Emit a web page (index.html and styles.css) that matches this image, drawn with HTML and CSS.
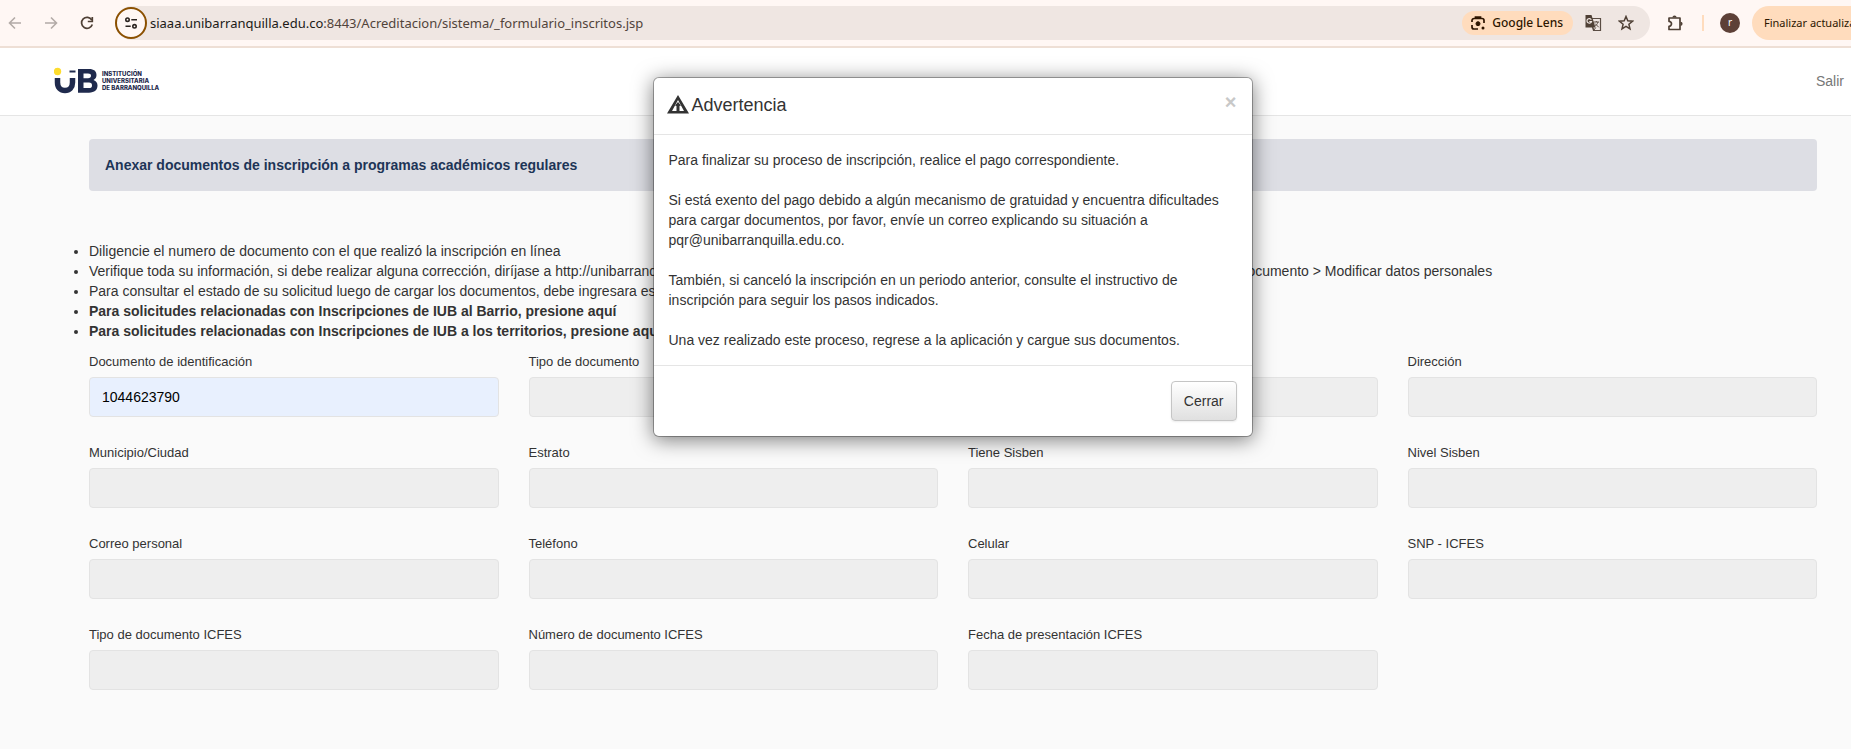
FILE: index.html
```html
<!DOCTYPE html>
<html lang="es">
<head>
<meta charset="utf-8">
<title>Anexar documentos de inscripción</title>
<link rel="stylesheet" href="styles.css">
</head>
<body>
<div class="toolbar">
  <button class="tool" type="button" aria-label="Atrás">
    <svg width="16" height="16" viewBox="0 0 16 16" fill="none" stroke="#b3aba7" stroke-width="1.600"><path d="M14 8H3M8 2.500 2.500 8 8 13.500"/></svg>
  </button>
  <button class="tool" type="button" aria-label="Adelante">
    <svg width="16" height="16" viewBox="0 0 16 16" fill="none" stroke="#b3aba7" stroke-width="1.600"><path d="M2 8h11M8 2.500 13.500 8 8 13.500"/></svg>
  </button>
  <button class="tool" type="button" aria-label="Recargar">
    <svg width="16" height="16" viewBox="0 0 16 16" fill="none" stroke="#4f4035" stroke-width="1.700"><path d="M12.800 5A5.500 5.500 0 1 0 13.300 9.500"/><path d="M13.300 2v4.500H8.800"/></svg>
  </button>
  <div class="omnibox">
    <button class="site-info" type="button" aria-label="Información del sitio">
      <svg width="14" height="14" viewBox="0 0 14 14" fill="none" stroke="#2b2420" stroke-width="1.600"><circle cx="3.500" cy="3.700" r="1.700"/><path d="M7.300 3.700H13M1.500 10.300h5.200"/><circle cx="10.500" cy="10.300" r="1.700"/></svg>
    </button>
    <span class="url"><span class="host">siaaa.unibarranquilla.edu.co</span>:8443/Acreditacion/sistema/_formulario_inscritos.jsp</span>
    <button class="lens" type="button">
      <svg width="16" height="16" viewBox="0 0 16 16" fill="none" stroke="#2e1500" stroke-width="1.700"><path d="M2 7V5.500A2 2 0 0 1 4 3.500h8a2 2 0 0 1 2 2V8M2 10v2a2 2 0 0 0 2 2h4M5.500 3V2h5v1"/><circle cx="8" cy="8.700" r="2" fill="#2e1500" stroke-width="1"/><circle cx="13" cy="13" r="1.500" fill="#2e1500" stroke="none"/></svg>
      Google Lens
    </button>
    <button class="small-tool" type="button" aria-label="Traducir">
      <svg width="18" height="18" viewBox="0 0 18 18"><path d="M6 4.500h10.500v12H9.500z" fill="none" stroke="#5a4c43" stroke-width="1.200"/><path d="M1.500 1h6l4 12.500h-10z" fill="#4f4035"/><path d="M7.300 5.700A2.300 2.300 0 1 0 7.500 7.500H5.300" fill="none" stroke="#efe6e2" stroke-width="1.200"/><path d="M9.500 8h5.500M12.300 7v1M14 8c-.6 2-1.800 3.500-3.500 4.500M11 9.500l3.800 3.800M9 13.500l.8 2.800 2-2.800" fill="none" stroke="#5a4c43"/></svg>
    </button>
    <button class="small-tool" type="button" aria-label="Marcador">
      <svg width="16" height="16" viewBox="0 0 16 16" fill="none" stroke="#4f4035" stroke-width="1.500"><path d="m8 1.500 1.800 4.300 4.700.4-3.600 3.100 1.100 4.600L8 11.400l-4 2.500 1.100-4.600L1.500 6.200l4.700-.4z"/></svg>
    </button>
  </div>
  <button class="tool extensions" type="button" aria-label="Extensiones">
    <svg width="18" height="18" viewBox="0 0 18 18"><path d="M2 4h11v11.500H2V12.300a2.500 2.500 0 0 0 0-5z" fill="none" stroke="#4f4035" stroke-width="1.700" stroke-linejoin="round"/><path d="M5.400 3.500a2.100 2.100 0 0 1 4.200 0zM13.500 7.700a2.100 2.100 0 0 1 0 4.200z" fill="#4f4035"/></svg>
  </button>
  <span class="divider"></span>
  <span class="avatar">r</span>
  <button class="update" type="button">Finalizar actualización</button>
</div>

<header class="site-header">
  <a class="brand" href="#" aria-label="Institución Universitaria de Barranquilla">
    <svg width="44" height="28" viewBox="0 0 44 28"><circle cx="3.500" cy="4.500" r="3.700" fill="#fddc2e"/><path d="M3.500 11v4.500c0 5 3 8 7.500 8s7.500-3 7.500-8V11" fill="none" stroke="#1f2a4d" stroke-width="5.500"/><path d="M15.500 4.500h6" stroke="#1f2a4d" stroke-width="2"/><path fill-rule="evenodd" fill="#1f2a4d" d="M24 2h11c5 0 7.500 2.300 7.500 6 0 2.300-1 4-3 5 2.800.9 4 3 4 5.600 0 4.500-3 7.100-8.500 7.100H24zM29.500 6.500v4.700H34c2 0 3-.8 3-2.400S36 6.500 34 6.500zM29.500 15.600v5.500H35c2 0 3-.9 3-2.700s-1-2.800-3-2.800z"/></svg>
    <span class="brand-name">INSTITUCIÓN<br>UNIVERSITARIA<br>DE BARRANQUILLA</span>
  </a>
  <a class="logout" href="#">Salir</a>
</header>

<main class="page">
  <h1 class="banner">Anexar documentos de inscripción a programas académicos regulares</h1>
  <ul class="notes">
    <li>Diligencie el numero de documento con el que realizó la inscripción en línea</li>
    <li>Verifique toda su información, si debe realizar alguna corrección, diríjase a http://unibarranquilla.edu.co > Inscripciones en línea > Programas académicos > Ingrese con el número de su documento > Modificar datos personales</li>
    <li>Para consultar el estado de su solicitud luego de cargar los documentos, debe ingresara esta misma página</li>
    <li><strong>Para solicitudes relacionadas con Inscripciones de IUB al Barrio, presione aquí</strong></li>
    <li><strong>Para solicitudes relacionadas con Inscripciones de IUB a los territorios, presione aquí</strong></li>
  </ul>
  <form class="fields">
    <div class="field"><label for="f1">Documento de identificación</label><input class="filled" id="f1" type="text" value="1044623790"></div>
    <div class="field"><label for="f2">Tipo de documento</label><input id="f2" type="text" readonly></div>
    <div class="field"><label for="f3">Nombre</label><input id="f3" type="text" readonly></div>
    <div class="field"><label for="f4">Dirección</label><input id="f4" type="text" readonly></div>
    <div class="field"><label for="f5">Municipio/Ciudad</label><input id="f5" type="text" readonly></div>
    <div class="field"><label for="f6">Estrato</label><input id="f6" type="text" readonly></div>
    <div class="field"><label for="f7">Tiene Sisben</label><input id="f7" type="text" readonly></div>
    <div class="field"><label for="f8">Nivel Sisben</label><input id="f8" type="text" readonly></div>
    <div class="field"><label for="f9">Correo personal</label><input id="f9" type="text" readonly></div>
    <div class="field"><label for="f10">Teléfono</label><input id="f10" type="text" readonly></div>
    <div class="field"><label for="f11">Celular</label><input id="f11" type="text" readonly></div>
    <div class="field"><label for="f12">SNP - ICFES</label><input id="f12" type="text" readonly></div>
    <div class="field"><label for="f13">Tipo de documento ICFES</label><input id="f13" type="text" readonly></div>
    <div class="field"><label for="f14">Número de documento ICFES</label><input id="f14" type="text" readonly></div>
    <div class="field"><label for="f15">Fecha de presentación ICFES</label><input id="f15" type="text" readonly></div>
  </form>
</main>

<div class="modal" role="dialog" aria-labelledby="modal-title">
  <div class="modal-header">
    <svg width="22" height="20" viewBox="0 0 22 20"><path fill="#333" fill-rule="evenodd" d="M11 0 22 18.500H0zM11 5 5 16h12z"/><path fill="#333" d="M9.500 17V11L8 10.500 11 7l3 3.500-1.500.5v6z"/></svg>
    <h2 class="modal-title" id="modal-title">Advertencia</h2>
    <button class="close" type="button" aria-label="Cerrar ventana">×</button>
  </div>
  <div class="modal-body">
    <p>Para finalizar su proceso de inscripción, realice el pago correspondiente.</p>
    <p>Si está exento del pago debido a algún mecanismo de gratuidad y encuentra dificultades para cargar documentos, por favor, envíe un correo explicando su situación a pqr@unibarranquilla.edu.co.</p>
    <p>También, si canceló la inscripción en un periodo anterior, consulte el instructivo de inscripción para seguir los pasos indicados.</p>
    <p>Una vez realizado este proceso, regrese a la aplicación y cargue sus documentos.</p>
  </div>
  <div class="modal-footer"><button class="btn" type="button">Cerrar</button></div>
</div>
</body>
</html>
```
FILE: styles.css
```css
* { box-sizing: border-box; }

body {
  margin: 0;
  min-height: 100vh;
  overflow: hidden;
  position: relative;
  background: #fafafa;
  color: #333;
  font: 14px/20px "Liberation Sans", Arial, sans-serif;
}

button {
  margin: 0;
  padding: 0;
  border: 0;
  background: none;
  color: inherit;
  font: inherit;
}

svg { display: block; flex: none; }
a { color: inherit; text-decoration: none; }

/* Browser bar */
.toolbar {
  display: flex;
  align-items: center;
  height: 48px;
  padding: 0 0 0 7px;
  border-bottom: 2px solid #eedfd5;
  background: #fff7f4;
  font: 13px/20px "Noto Sans", "Open Sans", sans-serif;
  overflow: hidden;
}
.tool { flex: none; margin-right: 20px; }
.omnibox {
  display: flex;
  align-items: center;
  flex: 1;
  min-width: 0;
  height: 34px;
  margin-right: 17px;
  padding-right: 16px;
  border-radius: 17px;
  background: #efe6e2;
}
.site-info {
  display: grid;
  place-items: center;
  flex: none;
  width: 32px;
  height: 32px;
  margin-right: 3px;
  border: 2px solid #8b5000;
  border-radius: 50%;
  background: #fff7f4;
}
.url { flex: 1; white-space: nowrap; overflow: hidden; color: #51443b; }
.host { color: #201a17; }
.lens {
  display: flex;
  align-items: center;
  gap: 6px;
  height: 24px;
  margin-right: 11px;
  padding: 0 10px 0 8px;
  border-radius: 12px;
  background: #ffdcbd;
  color: #2c1600;
  font-size: 12px;
  font-weight: 500;
  white-space: nowrap;
}
.small-tool + .small-tool { margin-left: 16px; }
.extensions { margin-right: 17px; }
.divider { flex: none; width: 2px; height: 16px; margin-right: 16px; background: #ffdcbd; }
.avatar {
  flex: none;
  width: 20px;
  height: 20px;
  margin-right: 12px;
  border-radius: 50%;
  background: #5d4037;
  color: #fff;
  font-size: 10px;
  line-height: 19px;
  text-align: center;
}
.update {
  flex: none;
  width: 99px;
  height: 34px;
  padding-left: 12px;
  border-radius: 17px 0 0 17px;
  background: #ffdcbd;
  color: #2c1600;
  font-size: 11px;
  text-align: left;
  white-space: nowrap;
  overflow: hidden;
}

/* Site header */
.site-header {
  display: flex;
  align-items: center;
  justify-content: space-between;
  height: 68px;
  padding: 0 7px 2px 54px;
  border-bottom: 1px solid #e5e5e5;
  background: #fff;
}
.brand { display: flex; align-items: center; gap: 4px; }
.brand-name { color: #1f2a4d; font: 800 6px/7px Inter, "Liberation Sans", sans-serif; }
.logout { color: #777; }

/* Page content */
.page { padding: 23px 34px 0 89px; }
.banner {
  margin: 0;
  padding: 16px;
  border-radius: 4px;
  background: #dddee4;
  color: #1d3557;
  font-size: 14px;
  line-height: 20px;
}
.notes { margin: 50px 0 11px; padding: 0; }
.notes li { white-space: nowrap; }
.fields {
  display: grid;
  grid-template-columns: repeat(4, minmax(0, 1fr));
  gap: 26px 30px;
}
.field label { display: block; margin-bottom: 5px; font-size: 13px; line-height: 20px; }
.field input {
  display: block;
  width: 100%;
  height: 40px;
  padding: 0 12px;
  border: 1px solid #e3e3e3;
  border-radius: 4px;
  background: #eee;
  color: #000;
  font: inherit;
}
.field .filled { background: #e8f0fe; }

/* Warning dialog */
.modal {
  position: absolute;
  top: 77px;
  left: 50%;
  width: 600px;
  margin-left: -273px;
  border: 1px solid rgba(0, 0, 0, 0.3);
  border-radius: 6px;
  background: #fff;
  background-clip: padding-box;
  box-shadow: 0 3px 20px rgba(0, 0, 0, 0.5);
}
.modal-header {
  display: flex;
  align-items: center;
  gap: 3px;
  padding: 8px 15px 10px 13px;
  border-bottom: 1px solid #e5e5e5;
}
.modal-title { flex: 1; margin: 0; font-size: 18px; font-weight: 400; line-height: 38px; }
.close {
  align-self: flex-start;
  color: #c8c8c8;
  font-size: 20px;
  font-weight: 700;
  line-height: 32px;
}
.modal-body { padding: 15px; }
.modal-body p { margin: 0 0 20px; }
.modal-body p:last-child { margin: 0; }
.modal-footer {
  display: flex;
  justify-content: flex-end;
  padding: 15px;
  border-top: 1px solid #e5e5e5;
}
.btn {
  height: 40px;
  padding: 0 12px;
  border: 1px solid #c5c5c5;
  border-radius: 4px;
  background: linear-gradient(#fff, #e0e0e0);
  box-shadow: 0 1px 2px rgba(0, 0, 0, 0.08);
}
```
